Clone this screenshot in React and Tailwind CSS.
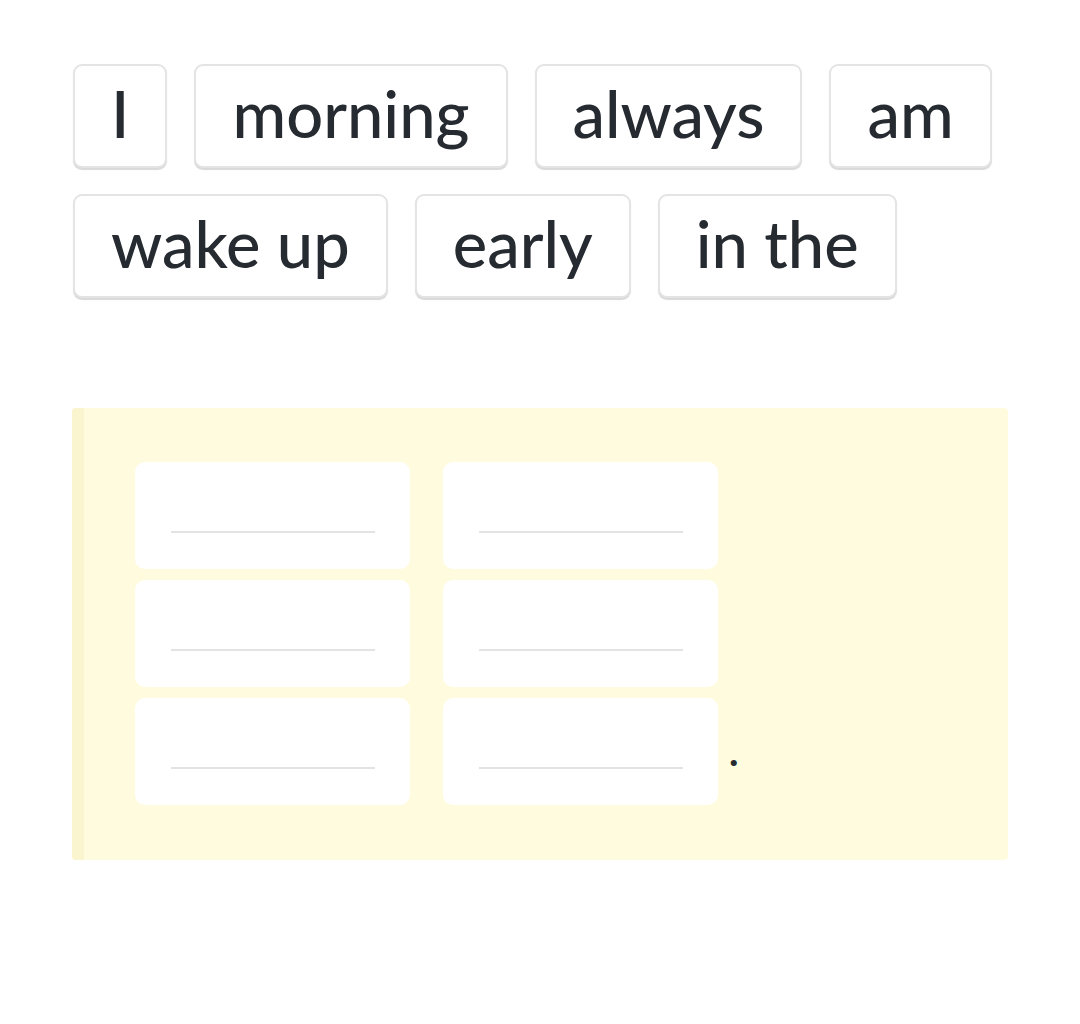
const WORDS = ['I', 'morning', 'always', 'am', 'wake up', 'early', 'in the']

function Chip({ word }) {
  return (
    <div className="flex h-[104px] items-center rounded-[9px] border-2 border-[#e4e4e4] bg-white px-[36px] shadow-[0_2px_1px_#d9d9d9]">
      <span className="-mt-[6px] text-[65px] font-medium leading-none text-[#262b31]">{word}</span>
    </div>
  )
}

function Blank() {
  return (
    <div className="flex h-[107px] w-[275px] items-end justify-center rounded-[10px] bg-white pb-[36px]">
      <div className="h-[2px] w-[204px] bg-[#e3e3e3]" />
    </div>
  )
}

export default function App() {
  return (
    <div className="min-h-screen bg-white pl-[73px] pr-[72px] pt-[64px]" style={{ fontFamily: 'Lato, "Open Sans", sans-serif' }}>
      <div className="flex w-[935px] flex-wrap gap-x-[27px] gap-y-[26px]">
        {WORDS.map(w => <Chip key={w} word={w} />)}
      </div>

      <div className="-ml-px mt-[110px] flex w-[936px] rounded-[4px] bg-[#fffbdf]">
        <div className="w-[12px] rounded-l-[4px] bg-[#fbf5cf]" />
        <div className="flex flex-col gap-[11px] pb-[55px] pl-[51px] pt-[54px]">
          <div className="flex gap-[33px]">
            <Blank />
            <Blank />
          </div>
          <div className="flex gap-[33px]">
            <Blank />
            <Blank />
          </div>
          <div className="flex items-end">
            <Blank />
            <div className="ml-[33px]"><Blank /></div>
            <span className="mb-[34px] ml-[11px] text-[40px] font-bold leading-none text-[#262b31]">.</span>
          </div>
        </div>
      </div>
    </div>
  )
}
